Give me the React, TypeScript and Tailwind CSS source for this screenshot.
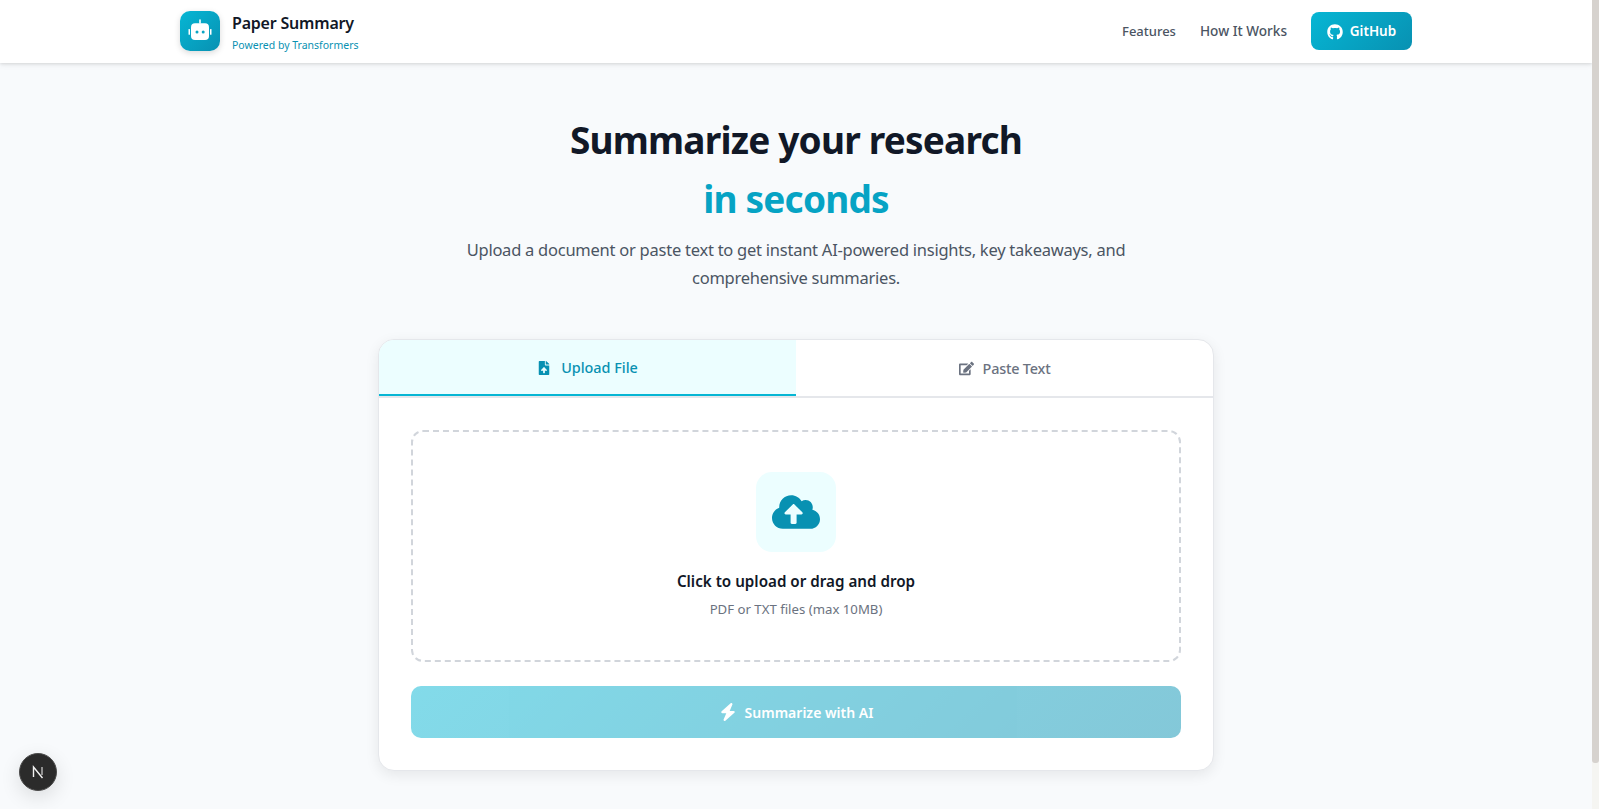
import { FaCloudUploadAlt, FaEdit, FaFileUpload, FaGithub } from 'react-icons/fa';
import { FaBolt } from 'react-icons/fa6';

function RobotIcon() {
  return (
    <svg viewBox="0 0 24 24" className="h-6 w-6" fill="currentColor">
      <rect x="11.2" y="0.3" width="1.6" height="4.5" rx="0.8" />
      <rect x="3" y="4.3" width="18" height="16.7" rx="4" />
      <rect x="0.5" y="10" width="1.5" height="5.7" rx="0.5" />
      <rect x="22" y="10" width="1.5" height="5.7" rx="0.5" />
      <circle cx="9" cy="13" r="1.5" fill="#0ba5c4" />
      <circle cx="15.2" cy="13" r="1.5" fill="#0ba5c4" />
    </svg>
  );
}

export default function App() {
  return (
    <div className="flex h-screen overflow-hidden bg-[#f8fafc] font-['Noto_Sans',sans-serif] leading-[1.6] text-[#111827]">
      <div className="min-w-0 flex-1">
        <header className="h-[63px] bg-white shadow-[0_1px_3px_rgba(0,0,0,0.1),0_2px_6px_rgba(0,0,0,0.06)]">
          <div className="mx-auto flex h-full max-w-[1280px] items-center justify-between px-6 pb-px">
            <div className="flex items-center gap-3">
              <div className="flex h-10 w-10 items-center justify-center rounded-[10px] bg-[linear-gradient(135deg,#06b6d4,#0891b2)] text-white shadow-[0_2px_6px_rgba(0,0,0,0.15)]">
                <RobotIcon />
              </div>
              <div className="flex flex-col pt-px">
                <span className="text-base leading-[26px] font-semibold tracking-[-0.2px]">Paper Summary</span>
                <span className="text-[10.5px] leading-[18px] text-[#0891b2]">Powered by Transformers</span>
              </div>
            </div>
            <nav className="flex items-center gap-6">
              <a className="text-[13px] font-medium text-[#4b5563]">Features</a>
              <a className="text-[13.6px] font-medium text-[#4b5563]">How It Works</a>
              <button className="flex h-[38px] w-[101px] items-center justify-center gap-[7px] rounded-[8px] bg-[linear-gradient(135deg,#06b6d4,#0891b2)] pt-px text-[13.5px] font-semibold text-white">
                <FaGithub className="h-4 w-4" />
                GitHub
              </button>
            </nav>
          </div>
        </header>

        <main className="mx-auto flex max-w-[1280px] flex-col items-center px-6 pt-[47px]">
          <h1 className="text-center text-[37px] leading-[59px] font-bold tracking-[-0.8px]">
            Summarize your research
            <span className="block text-[#06a3c4]">in seconds</span>
          </h1>
          <p className="mt-[7.5px] max-w-[700px] text-center text-[16.5px] leading-[28.8px] tracking-[-0.25px] text-[#4b5563]">
            Upload a document or paste text to get instant AI-powered insights, key takeaways, and comprehensive summaries.
          </p>

          <section className="mt-[45.9px] w-[836px] overflow-hidden rounded-2xl border border-[#e5e7eb] bg-white shadow-[0_4px_14px_rgba(0,0,0,0.08)]">
            <div className="flex h-[58px] border-b-2 border-[#e5e7eb]">
              <button className="flex flex-1 items-center justify-center gap-2 border-b-2 border-[#06b6d4] bg-[#ecfeff] pt-[2px] text-[14.4px] font-medium text-[#0891b2]">
                <FaFileUpload className="h-[14px] w-[14px]" />
                <span className="ml-[2px]">Upload File</span>
              </button>
              <button className="flex flex-1 items-center justify-center gap-2 pt-[2px] text-[14.4px] font-medium tracking-[-0.2px] text-[#6b7280]">
                <FaEdit className="h-[15px] w-[15px]" />
                <span className="ml-px">Paste Text</span>
              </button>
            </div>

            <div className="p-8">
              <div className="flex h-[232px] flex-col items-center rounded-xl border-2 border-dashed border-[#d1d5db] pt-[40px]">
                <div className="flex h-20 w-20 items-center justify-center rounded-2xl bg-[#ecfeff] text-[#0891b2]">
                  <FaCloudUploadAlt className="h-12 w-12" />
                </div>
                <p className="mt-[17px] text-[15.2px] leading-6 font-semibold">Click to upload or drag and drop</p>
                <p className="mt-[6px] text-[13.2px] leading-5 text-[#6b7280]">PDF or TXT files (max 10MB)</p>
              </div>

              <button className="mt-6 flex h-[52px] w-full items-center justify-center gap-2 rounded-[10px] bg-[linear-gradient(135deg,#06b6d4,#0891b2)] pt-[2px] text-sm font-semibold text-white opacity-50">
                <FaBolt className="-mt-[2px] h-[18px] w-[18px]" />
                Summarize with AI
              </button>
            </div>
          </section>
        </main>
      </div>

      {/* scrollbar */}
      <aside className="h-full w-[7px] shrink-0 bg-[#f5f5f2]">
        <div className="h-[763px] rounded-b-[3px] bg-[#d6d2ce]" />
      </aside>

      <div className="fixed bottom-[18px] left-[19px] flex h-[38px] w-[38px] items-center justify-center rounded-full border border-[#4a4a4a] bg-[#2b2b2b] shadow-[0_6px_20px_rgba(0,0,0,0.12)]">
        <svg viewBox="0 0 16 16" className="h-4 w-4" fill="none">
          <path d="M3.5 13V3L12.5 14" stroke="#f2f2f2" strokeWidth="1.4" />
          <path d="M12 3v8" stroke="#bdbdbd" strokeWidth="1.4" />
        </svg>
      </div>
    </div>
  );
}
